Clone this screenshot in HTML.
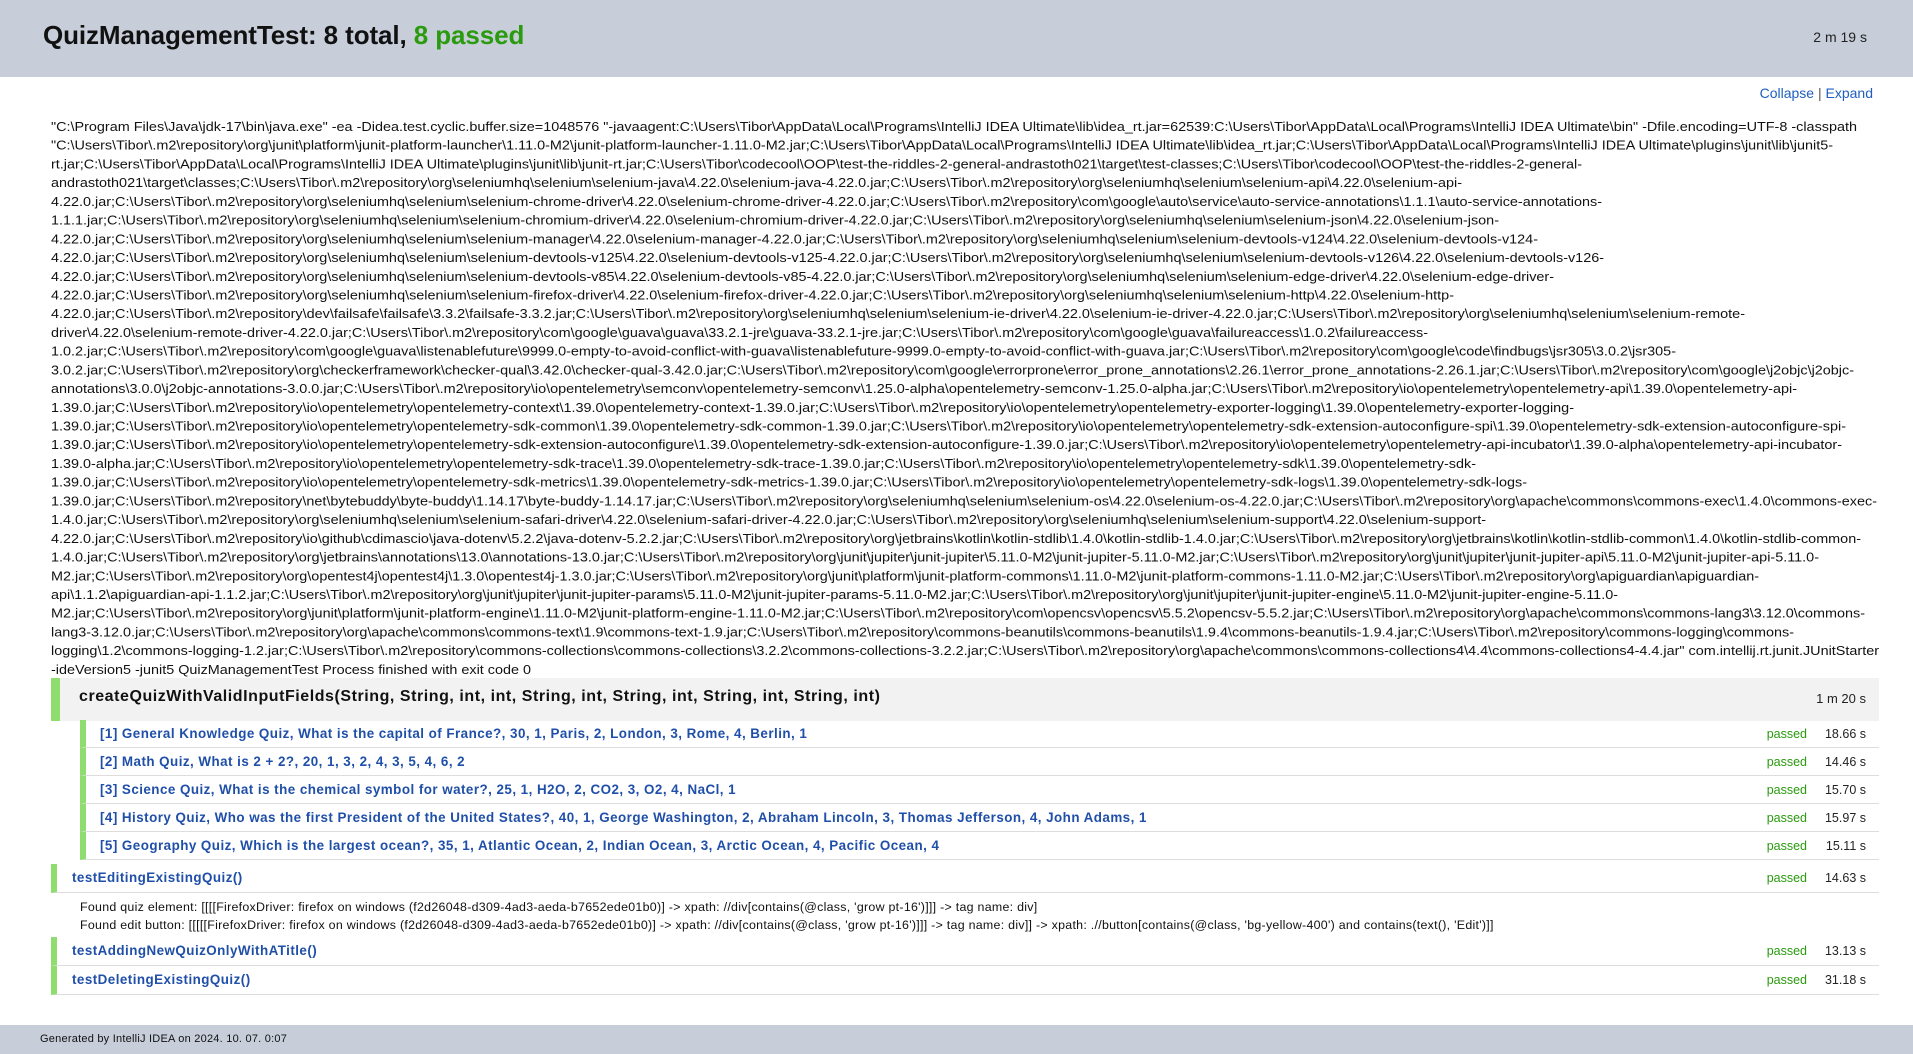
<!DOCTYPE html>
<html><head><meta charset="utf-8"><style>
*{margin:0;padding:0;box-sizing:border-box}
body{width:1913px;height:1054px;overflow:hidden;background:#fff;font-family:"Liberation Sans",Arial,sans-serif;color:#000;position:relative}
.hdr{position:absolute;left:0;top:0;width:1913px;height:77px;background:#c7cdd9}
.hdr h1{position:absolute;left:43px;top:20px;font-size:26px;font-weight:bold;color:#111;letter-spacing:-0.1px}
.hdr h1 span{color:#2a9b0e}
.hdr .t{position:absolute;right:46px;top:29px;font-size:14px;color:#222}
.ce{position:absolute;right:40px;top:85px;font-size:14px;color:#1f5fbf}
.ce i{font-style:normal;color:#555}
svg.log{position:absolute;left:0;top:0}
svg.log text{font-family:"Liberation Sans",Arial,sans-serif;font-size:13px;fill:#111;white-space:pre}
.row{position:absolute;left:51px;width:1828px;border-left:9px solid #8fdd6f}
.r0{top:678px;height:43px;background:#f2f2f2;font-size:16px;font-weight:bold;color:#111;letter-spacing:0.55px}
.r0 .n{position:absolute;left:19px;top:10px;white-space:nowrap}
.r0 .d{position:absolute;right:13px;top:13px;font-size:13px;font-weight:normal;color:#222;letter-spacing:0}
.sub{position:absolute;left:80px;width:1799px;height:28px;border-left:6px solid #8fdd6f;border-bottom:1px solid #ddd}
.sub .n,.tr .n{position:absolute;top:6px;font-size:13.4px;font-weight:bold;color:#1f4fa8;letter-spacing:0.46px;white-space:nowrap}
.sub .n{left:14px}
.p{position:absolute;right:72px;top:7px;font-size:12.5px;color:#2a9b0e}
.dd{position:absolute;right:13px;top:7px;font-size:12.5px;color:#222}
.tr{position:absolute;left:51px;width:1828px;height:29px;border-left:6px solid #8fdd6f;border-bottom:1px solid #ddd}
.tr .n{left:15px}
.out{position:absolute;left:80px;font-size:12.4px;color:#111;white-space:nowrap;letter-spacing:0.28px}
.ftr{position:absolute;left:0;top:1025px;width:1913px;height:29px;background:#c7cdd9;font-size:11px;color:#111;letter-spacing:0.23px}
.ftr span{position:absolute;left:40px;top:8px}
</style></head><body>
<div class="hdr"><h1>QuizManagementTest: 8 total, <span>8 passed</span></h1><div class="t">2 m 19 s</div></div>
<div class="ce">Collapse <i>|</i> Expand</div>
<svg class="log" width="1913" height="680" xmlns="http://www.w3.org/2000/svg">
<text x="51" y="131" textLength="1806" lengthAdjust="spacingAndGlyphs">"C:\Program Files\Java\jdk-17\bin\java.exe" -ea -Didea.test.cyclic.buffer.size=1048576 "-javaagent:C:\Users\Tibor\AppData\Local\Programs\IntelliJ IDEA Ultimate\lib\idea_rt.jar=62539:C:\Users\Tibor\AppData\Local\Programs\IntelliJ IDEA Ultimate\bin" -Dfile.encoding=UTF-8 -classpath</text>
<text x="51" y="149.7" textLength="1782" lengthAdjust="spacingAndGlyphs">"C:\Users\Tibor\.m2\repository\org\junit\platform\junit-platform-launcher\1.11.0-M2\junit-platform-launcher-1.11.0-M2.jar;C:\Users\Tibor\AppData\Local\Programs\IntelliJ IDEA Ultimate\lib\idea_rt.jar;C:\Users\Tibor\AppData\Local\Programs\IntelliJ IDEA Ultimate\plugins\junit\lib\junit5-</text>
<text x="51" y="168.4" textLength="1531" lengthAdjust="spacingAndGlyphs">rt.jar;C:\Users\Tibor\AppData\Local\Programs\IntelliJ IDEA Ultimate\plugins\junit\lib\junit-rt.jar;C:\Users\Tibor\codecool\OOP\test-the-riddles-2-general-andrastoth021\target\test-classes;C:\Users\Tibor\codecool\OOP\test-the-riddles-2-general-</text>
<text x="51" y="187.2" textLength="1411" lengthAdjust="spacingAndGlyphs">andrastoth021\target\classes;C:\Users\Tibor\.m2\repository\org\seleniumhq\selenium\selenium-java\4.22.0\selenium-java-4.22.0.jar;C:\Users\Tibor\.m2\repository\org\seleniumhq\selenium\selenium-api\4.22.0\selenium-api-</text>
<text x="51" y="205.9" textLength="1551" lengthAdjust="spacingAndGlyphs">4.22.0.jar;C:\Users\Tibor\.m2\repository\org\seleniumhq\selenium\selenium-chrome-driver\4.22.0\selenium-chrome-driver-4.22.0.jar;C:\Users\Tibor\.m2\repository\com\google\auto\service\auto-service-annotations\1.1.1\auto-service-annotations-</text>
<text x="51" y="224.6" textLength="1448" lengthAdjust="spacingAndGlyphs">1.1.1.jar;C:\Users\Tibor\.m2\repository\org\seleniumhq\selenium\selenium-chromium-driver\4.22.0\selenium-chromium-driver-4.22.0.jar;C:\Users\Tibor\.m2\repository\org\seleniumhq\selenium\selenium-json\4.22.0\selenium-json-</text>
<text x="51" y="243.3" textLength="1487" lengthAdjust="spacingAndGlyphs">4.22.0.jar;C:\Users\Tibor\.m2\repository\org\seleniumhq\selenium\selenium-manager\4.22.0\selenium-manager-4.22.0.jar;C:\Users\Tibor\.m2\repository\org\seleniumhq\selenium\selenium-devtools-v124\4.22.0\selenium-devtools-v124-</text>
<text x="51" y="262" textLength="1553" lengthAdjust="spacingAndGlyphs">4.22.0.jar;C:\Users\Tibor\.m2\repository\org\seleniumhq\selenium\selenium-devtools-v125\4.22.0\selenium-devtools-v125-4.22.0.jar;C:\Users\Tibor\.m2\repository\org\seleniumhq\selenium\selenium-devtools-v126\4.22.0\selenium-devtools-v126-</text>
<text x="51" y="280.8" textLength="1503" lengthAdjust="spacingAndGlyphs">4.22.0.jar;C:\Users\Tibor\.m2\repository\org\seleniumhq\selenium\selenium-devtools-v85\4.22.0\selenium-devtools-v85-4.22.0.jar;C:\Users\Tibor\.m2\repository\org\seleniumhq\selenium\selenium-edge-driver\4.22.0\selenium-edge-driver-</text>
<text x="51" y="299.5" textLength="1403" lengthAdjust="spacingAndGlyphs">4.22.0.jar;C:\Users\Tibor\.m2\repository\org\seleniumhq\selenium\selenium-firefox-driver\4.22.0\selenium-firefox-driver-4.22.0.jar;C:\Users\Tibor\.m2\repository\org\seleniumhq\selenium\selenium-http\4.22.0\selenium-http-</text>
<text x="51" y="318.2" textLength="1694" lengthAdjust="spacingAndGlyphs">4.22.0.jar;C:\Users\Tibor\.m2\repository\dev\failsafe\failsafe\3.3.2\failsafe-3.3.2.jar;C:\Users\Tibor\.m2\repository\org\seleniumhq\selenium\selenium-ie-driver\4.22.0\selenium-ie-driver-4.22.0.jar;C:\Users\Tibor\.m2\repository\org\seleniumhq\selenium\selenium-remote-</text>
<text x="51" y="336.9" textLength="1377" lengthAdjust="spacingAndGlyphs">driver\4.22.0\selenium-remote-driver-4.22.0.jar;C:\Users\Tibor\.m2\repository\com\google\guava\guava\33.2.1-jre\guava-33.2.1-jre.jar;C:\Users\Tibor\.m2\repository\com\google\guava\failureaccess\1.0.2\failureaccess-</text>
<text x="51" y="355.6" textLength="1625" lengthAdjust="spacingAndGlyphs">1.0.2.jar;C:\Users\Tibor\.m2\repository\com\google\guava\listenablefuture\9999.0-empty-to-avoid-conflict-with-guava\listenablefuture-9999.0-empty-to-avoid-conflict-with-guava.jar;C:\Users\Tibor\.m2\repository\com\google\code\findbugs\jsr305\3.0.2\jsr305-</text>
<text x="51" y="374.4" textLength="1803" lengthAdjust="spacingAndGlyphs">3.0.2.jar;C:\Users\Tibor\.m2\repository\org\checkerframework\checker-qual\3.42.0\checker-qual-3.42.0.jar;C:\Users\Tibor\.m2\repository\com\google\errorprone\error_prone_annotations\2.26.1\error_prone_annotations-2.26.1.jar;C:\Users\Tibor\.m2\repository\com\google\j2objc\j2objc-</text>
<text x="51" y="393.1" textLength="1746" lengthAdjust="spacingAndGlyphs">annotations\3.0.0\j2objc-annotations-3.0.0.jar;C:\Users\Tibor\.m2\repository\io\opentelemetry\semconv\opentelemetry-semconv\1.25.0-alpha\opentelemetry-semconv-1.25.0-alpha.jar;C:\Users\Tibor\.m2\repository\io\opentelemetry\opentelemetry-api\1.39.0\opentelemetry-api-</text>
<text x="51" y="411.8" textLength="1523" lengthAdjust="spacingAndGlyphs">1.39.0.jar;C:\Users\Tibor\.m2\repository\io\opentelemetry\opentelemetry-context\1.39.0\opentelemetry-context-1.39.0.jar;C:\Users\Tibor\.m2\repository\io\opentelemetry\opentelemetry-exporter-logging\1.39.0\opentelemetry-exporter-logging-</text>
<text x="51" y="430.5" textLength="1795" lengthAdjust="spacingAndGlyphs">1.39.0.jar;C:\Users\Tibor\.m2\repository\io\opentelemetry\opentelemetry-sdk-common\1.39.0\opentelemetry-sdk-common-1.39.0.jar;C:\Users\Tibor\.m2\repository\io\opentelemetry\opentelemetry-sdk-extension-autoconfigure-spi\1.39.0\opentelemetry-sdk-extension-autoconfigure-spi-</text>
<text x="51" y="449.2" textLength="1791" lengthAdjust="spacingAndGlyphs">1.39.0.jar;C:\Users\Tibor\.m2\repository\io\opentelemetry\opentelemetry-sdk-extension-autoconfigure\1.39.0\opentelemetry-sdk-extension-autoconfigure-1.39.0.jar;C:\Users\Tibor\.m2\repository\io\opentelemetry\opentelemetry-api-incubator\1.39.0-alpha\opentelemetry-api-incubator-</text>
<text x="51" y="468" textLength="1425" lengthAdjust="spacingAndGlyphs">1.39.0-alpha.jar;C:\Users\Tibor\.m2\repository\io\opentelemetry\opentelemetry-sdk-trace\1.39.0\opentelemetry-sdk-trace-1.39.0.jar;C:\Users\Tibor\.m2\repository\io\opentelemetry\opentelemetry-sdk\1.39.0\opentelemetry-sdk-</text>
<text x="51" y="486.7" textLength="1476" lengthAdjust="spacingAndGlyphs">1.39.0.jar;C:\Users\Tibor\.m2\repository\io\opentelemetry\opentelemetry-sdk-metrics\1.39.0\opentelemetry-sdk-metrics-1.39.0.jar;C:\Users\Tibor\.m2\repository\io\opentelemetry\opentelemetry-sdk-logs\1.39.0\opentelemetry-sdk-logs-</text>
<text x="51" y="505.4" textLength="1826" lengthAdjust="spacingAndGlyphs">1.39.0.jar;C:\Users\Tibor\.m2\repository\net\bytebuddy\byte-buddy\1.14.17\byte-buddy-1.14.17.jar;C:\Users\Tibor\.m2\repository\org\seleniumhq\selenium\selenium-os\4.22.0\selenium-os-4.22.0.jar;C:\Users\Tibor\.m2\repository\org\apache\commons\commons-exec\1.4.0\commons-exec-</text>
<text x="51" y="524.1" textLength="1435" lengthAdjust="spacingAndGlyphs">1.4.0.jar;C:\Users\Tibor\.m2\repository\org\seleniumhq\selenium\selenium-safari-driver\4.22.0\selenium-safari-driver-4.22.0.jar;C:\Users\Tibor\.m2\repository\org\seleniumhq\selenium\selenium-support\4.22.0\selenium-support-</text>
<text x="51" y="542.8" textLength="1810" lengthAdjust="spacingAndGlyphs">4.22.0.jar;C:\Users\Tibor\.m2\repository\io\github\cdimascio\java-dotenv\5.2.2\java-dotenv-5.2.2.jar;C:\Users\Tibor\.m2\repository\org\jetbrains\kotlin\kotlin-stdlib\1.4.0\kotlin-stdlib-1.4.0.jar;C:\Users\Tibor\.m2\repository\org\jetbrains\kotlin\kotlin-stdlib-common\1.4.0\kotlin-stdlib-common-</text>
<text x="51" y="561.6" textLength="1768" lengthAdjust="spacingAndGlyphs">1.4.0.jar;C:\Users\Tibor\.m2\repository\org\jetbrains\annotations\13.0\annotations-13.0.jar;C:\Users\Tibor\.m2\repository\org\junit\jupiter\junit-jupiter\5.11.0-M2\junit-jupiter-5.11.0-M2.jar;C:\Users\Tibor\.m2\repository\org\junit\jupiter\junit-jupiter-api\5.11.0-M2\junit-jupiter-api-5.11.0-</text>
<text x="51" y="580.3" textLength="1708" lengthAdjust="spacingAndGlyphs">M2.jar;C:\Users\Tibor\.m2\repository\org\opentest4j\opentest4j\1.3.0\opentest4j-1.3.0.jar;C:\Users\Tibor\.m2\repository\org\junit\platform\junit-platform-commons\1.11.0-M2\junit-platform-commons-1.11.0-M2.jar;C:\Users\Tibor\.m2\repository\org\apiguardian\apiguardian-</text>
<text x="51" y="599" textLength="1567" lengthAdjust="spacingAndGlyphs">api\1.1.2\apiguardian-api-1.1.2.jar;C:\Users\Tibor\.m2\repository\org\junit\jupiter\junit-jupiter-params\5.11.0-M2\junit-jupiter-params-5.11.0-M2.jar;C:\Users\Tibor\.m2\repository\org\junit\jupiter\junit-jupiter-engine\5.11.0-M2\junit-jupiter-engine-5.11.0-</text>
<text x="51" y="617.7" textLength="1814" lengthAdjust="spacingAndGlyphs">M2.jar;C:\Users\Tibor\.m2\repository\org\junit\platform\junit-platform-engine\1.11.0-M2\junit-platform-engine-1.11.0-M2.jar;C:\Users\Tibor\.m2\repository\com\opencsv\opencsv\5.5.2\opencsv-5.5.2.jar;C:\Users\Tibor\.m2\repository\org\apache\commons\commons-lang3\3.12.0\commons-</text>
<text x="51" y="636.4" textLength="1743" lengthAdjust="spacingAndGlyphs">lang3-3.12.0.jar;C:\Users\Tibor\.m2\repository\org\apache\commons\commons-text\1.9\commons-text-1.9.jar;C:\Users\Tibor\.m2\repository\commons-beanutils\commons-beanutils\1.9.4\commons-beanutils-1.9.4.jar;C:\Users\Tibor\.m2\repository\commons-logging\commons-</text>
<text x="51" y="655.2" textLength="1828" lengthAdjust="spacingAndGlyphs">logging\1.2\commons-logging-1.2.jar;C:\Users\Tibor\.m2\repository\commons-collections\commons-collections\3.2.2\commons-collections-3.2.2.jar;C:\Users\Tibor\.m2\repository\org\apache\commons\commons-collections4\4.4\commons-collections4-4.4.jar" com.intellij.rt.junit.JUnitStarter</text>
<text x="51" y="673.9" textLength="480" lengthAdjust="spacingAndGlyphs">-ideVersion5 -junit5 QuizManagementTest Process finished with exit code 0</text>
</svg>

<div class="row r0"><span class="n">createQuizWithValidInputFields(String, String, int, int, String, int, String, int, String, int, String, int)</span><span class="d">1 m 20 s</span></div>

<div class="sub" style="top:720px"><span class="n">[1] General Knowledge Quiz, What is the capital of France?, 30, 1, Paris, 2, London, 3, Rome, 4, Berlin, 1</span><span class="p">passed</span><span class="dd">18.66 s</span></div>
<div class="sub" style="top:748px"><span class="n">[2] Math Quiz, What is 2 + 2?, 20, 1, 3, 2, 4, 3, 5, 4, 6, 2</span><span class="p">passed</span><span class="dd">14.46 s</span></div>
<div class="sub" style="top:776px"><span class="n">[3] Science Quiz, What is the chemical symbol for water?, 25, 1, H2O, 2, CO2, 3, O2, 4, NaCl, 1</span><span class="p">passed</span><span class="dd">15.70 s</span></div>
<div class="sub" style="top:804px"><span class="n">[4] History Quiz, Who was the first President of the United States?, 40, 1, George Washington, 2, Abraham Lincoln, 3, Thomas Jefferson, 4, John Adams, 1</span><span class="p">passed</span><span class="dd">15.97 s</span></div>
<div class="sub" style="top:832px"><span class="n">[5] Geography Quiz, Which is the largest ocean?, 35, 1, Atlantic Ocean, 2, Indian Ocean, 3, Arctic Ocean, 4, Pacific Ocean, 4</span><span class="p">passed</span><span class="dd">15.11 s</span></div>

<div class="tr" style="top:864px"><span class="n">testEditingExistingQuiz()</span><span class="p">passed</span><span class="dd">14.63 s</span></div>
<div class="out" style="top:900px">Found quiz element: [[[[FirefoxDriver: firefox on windows (f2d26048-d309-4ad3-aeda-b7652ede01b0)] -&gt; xpath: //div[contains(@class, 'grow pt-16')]]] -&gt; tag name: div]</div>
<div class="out" style="top:918px">Found edit button: [[[[[FirefoxDriver: firefox on windows (f2d26048-d309-4ad3-aeda-b7652ede01b0)] -&gt; xpath: //div[contains(@class, 'grow pt-16')]]] -&gt; tag name: div]] -&gt; xpath: .//button[contains(@class, 'bg-yellow-400') and contains(text(), 'Edit')]]</div>
<div class="tr" style="top:937px"><span class="n">testAddingNewQuizOnlyWithATitle()</span><span class="p">passed</span><span class="dd">13.13 s</span></div>
<div class="tr" style="top:966px"><span class="n">testDeletingExistingQuiz()</span><span class="p">passed</span><span class="dd">31.18 s</span></div>

<div class="ftr"><span>Generated by IntelliJ IDEA on 2024. 10. 07. 0:07</span></div>
</body></html>
